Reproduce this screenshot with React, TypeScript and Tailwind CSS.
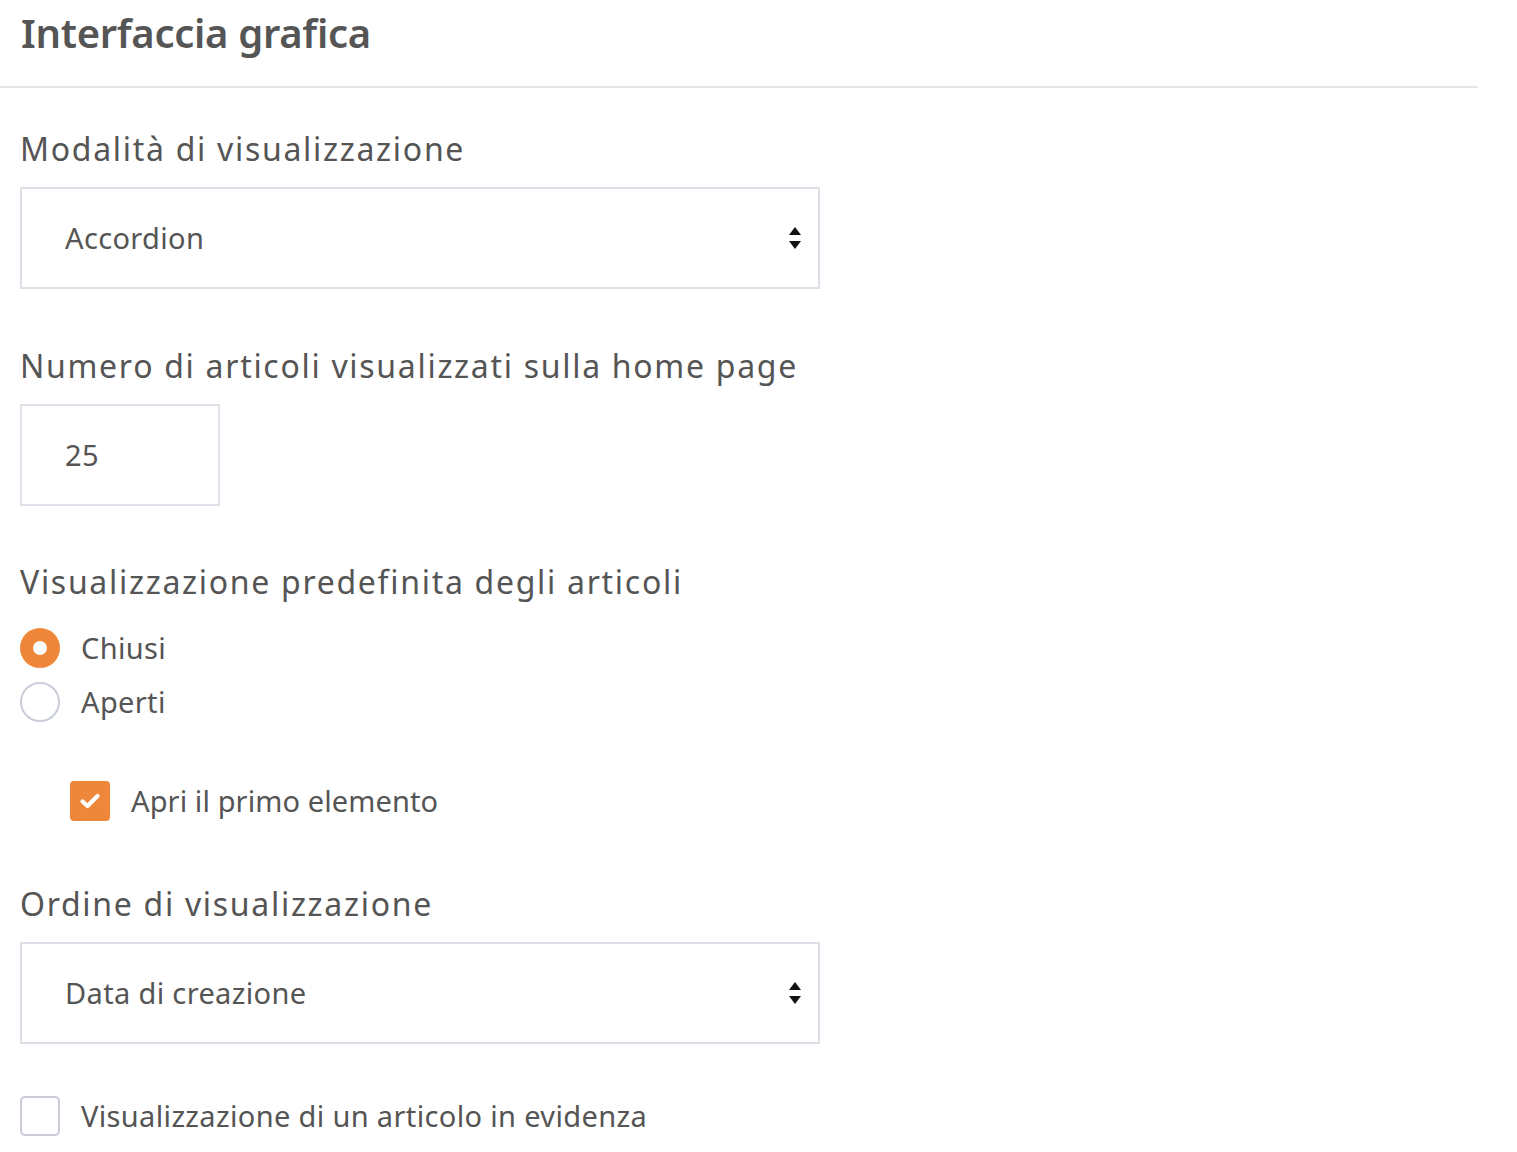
const font = { fontFamily: '"Noto Sans", "Open Sans", sans-serif' };

const SelectArrows = () => (
  <svg width="12" height="22" viewBox="0 0 12 22" className="shrink-0">
    <path d="M6 0 L12 8 L0 8 Z" fill="#111" />
    <path d="M0 14 L12 14 L6 22 Z" fill="#111" />
  </svg>
);

const SelectBox = ({ value }: { value: string }) => (
  <div className="mt-[20px] flex h-[102px] w-[800px] items-center justify-between border-2 border-[#dcdfe6] bg-white pl-[43px] pr-[17px]">
    <span className="text-[29px] leading-[36px] tracking-[0.35px] text-[#555555]">{value}</span>
    <SelectArrows />
  </div>
);

const Label = ({ text, className }: { text: string; className: string }) => (
  <div className={`text-[32px] leading-[36px] tracking-[1.7px] text-[#555555] ${className}`}>{text}</div>
);

const Radio = ({ label, checked }: { label: string; checked?: boolean }) => (
  <div className="flex h-[54px] items-center gap-[21px]">
    {checked ? (
      <span className="flex h-[40px] w-[40px] items-center justify-center rounded-full bg-[#ef873a]">
        <span className="h-[14px] w-[14px] rounded-full bg-white" />
      </span>
    ) : (
      <span className="h-[40px] w-[40px] rounded-full border-2 border-[#c9cdd8] bg-white" />
    )}
    <span className="text-[29px] leading-[36px] tracking-[0.35px] text-[#555555]">{label}</span>
  </div>
);

export default function App() {
  return (
    <div className="min-h-screen bg-white" style={font}>
      <div className="w-[1478px]">
        <header className="h-[88px] border-b-2 border-[#e6e6e6] pl-[21px] pt-[9px]">
          <h1 className="text-[40px] font-semibold leading-[48px] tracking-[-0.3px] text-[#555555]">
            Interfaccia grafica
          </h1>
        </header>

        <div className="flex flex-col pl-[20px]">
          <Label text="Modalità di visualizzazione" className="mt-[43px]" />
          <SelectBox value="Accordion" />

          <Label text="Numero di articoli visualizzati sulla home page" className="mt-[59px]" />
          <div className="mt-[20px] flex h-[102px] w-[200px] items-center border-2 border-[#dde2e8] pl-[43px]">
            <span className="text-[29px] leading-[36px] tracking-[0.35px] text-[#555555]">25</span>
          </div>

          <Label text="Visualizzazione predefinita degli articoli" className="mt-[58px]" />
          <div className="mt-[21px] flex flex-col">
            <Radio label="Chiusi" checked />
            <Radio label="Aperti" />
          </div>

          <div className="ml-[50px] mt-[52px] flex h-[40px] items-center gap-[21px]">
            <span className="flex h-[40px] w-[40px] items-center justify-center rounded-[4px] bg-[#ef873a]">
              <svg width="22" height="18" viewBox="0 0 22 18">
                <path
                  d="M3.5 9.5 L8.5 14 L18.5 4"
                  fill="none"
                  stroke="#ffffff"
                  strokeWidth="4.2"
                  strokeLinecap="round"
                  strokeLinejoin="round"
                />
              </svg>
            </span>
            <span className="text-[29px] leading-[36px] tracking-[0.1px] text-[#555555]">
              Apri il primo elemento
            </span>
          </div>

          <Label text="Ordine di visualizzazione" className="mt-[65px]" />
          <SelectBox value="Data di creazione" />

          <div className="mt-[52px] flex h-[40px] items-center gap-[21px]">
            <span className="h-[40px] w-[40px] rounded-[5px] border-2 border-[#c9cdd8] bg-white" />
            <span className="text-[29px] leading-[36px] tracking-[0.35px] text-[#555555]">
              Visualizzazione di un articolo in evidenza
            </span>
          </div>
        </div>
      </div>
    </div>
  );
}
